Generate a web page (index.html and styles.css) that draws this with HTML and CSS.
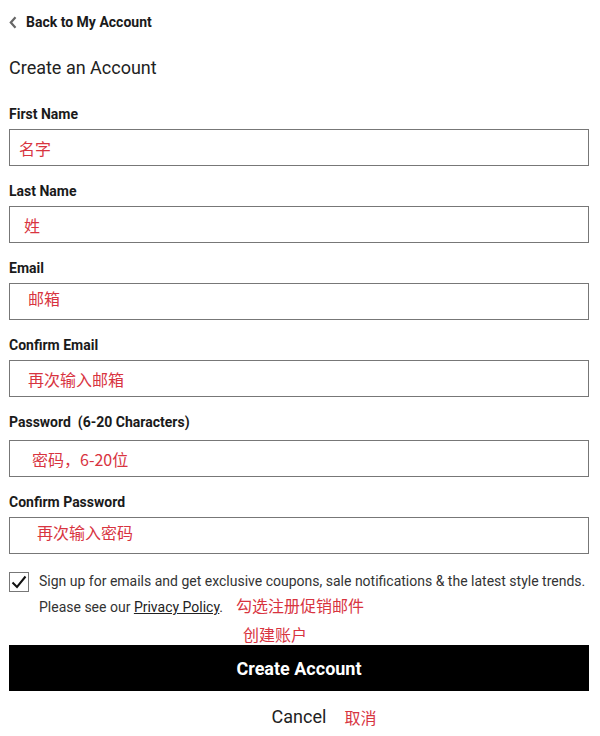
FILE: index.html
```html
<!DOCTYPE html>
<html lang="en">
<head>
<meta charset="utf-8">
<title>Create an Account</title>
<link rel="stylesheet" href="styles.css">
</head>
<body>
<div class="page">
  <a class="back" href="#">
    <svg class="chev" width="8" height="13" viewBox="0 0 8 13"><path d="M6.5 1.2 L1.8 6.5 L6.5 11.8" fill="none" stroke="#666" stroke-width="2.2"/></svg>
    <span>Back to My Account</span>
  </a>
  <h1 class="title">Create an Account</h1>

  <div class="field">
    <label class="label">First Name</label>
    <div class="input"><span class="note pad1">名字</span></div>
  </div>
  <div class="field">
    <label class="label">Last Name</label>
    <div class="input"><span class="note pad2">姓</span></div>
  </div>
  <div class="field">
    <label class="label">Email</label>
    <div class="input"><span class="note pad3 up">邮箱</span></div>
  </div>
  <div class="field">
    <label class="label">Confirm Email</label>
    <div class="input"><span class="note pad3">再次输入邮箱</span></div>
  </div>
  <div class="field field-wide">
    <label class="label">Password&nbsp; (6-20 Characters)</label>
    <div class="input"><span class="note pad4">密码，6-20位</span></div>
  </div>
  <div class="field">
    <label class="label">Confirm Password</label>
    <div class="input"><span class="note pad5 up">再次输入密码</span></div>
  </div>

  <div class="optin">
    <span class="box">
      <svg width="18" height="18" viewBox="0 0 18 18"><path d="M2.5 9.5 L7 14 L15.5 3.5" fill="none" stroke="#111" stroke-width="2"/></svg>
    </span>
    <div class="optin-text">
      <span class="optin-line">Sign up for emails and get exclusive coupons, sale notifications &amp; the latest style trends.</span>
      <span class="optin-line">Please see our <a href="#" class="link">Privacy Policy</a>.<span class="note inline">勾选注册促销邮件</span></span>
    </div>
  </div>
  <div class="note-line"><span class="note">创建账户</span></div>

  <button class="primary">Create Account</button>
  <div class="cancel-row">
    <span class="cancel">Cancel<span class="note cancel-note">取消</span></span>
  </div>
</div>
</body>
</html>
```

FILE: styles.css
```css
html, body {
  margin: 0;
  padding: 0;
  background: #fff;
}
body {
  font-family: Roboto, "Liberation Sans", sans-serif;
  color: #1a1a1a;
}
.page {
  padding: 0 11px 0 9px;
}
.back {
  display: flex;
  align-items: center;
  gap: 9px;
  margin-top: 13px;
  height: 18px;
  color: #1a1a1a;
  text-decoration: none;
  font-size: 14px;
  font-weight: 700;
  line-height: 18px;
}
.chev {
  display: block;
}
.title {
  margin: 24px 0 0;
  font-size: 18px;
  font-weight: 400;
  line-height: 26px;
  color: #222;
}
.field {
  margin-top: 16px;
}
.title + .field {
  margin-top: 24px;
}
.label {
  display: block;
  font-size: 14px;
  font-weight: 700;
  line-height: 18px;
  color: #1a1a1a;
  margin-bottom: 6px;
}
.field-wide .label {
  margin-bottom: 9px;
}
.input {
  box-sizing: border-box;
  height: 37px;
  border: 1px solid #777;
  display: flex;
  align-items: center;
}
.note {
  font-family: "Noto Sans CJK SC", sans-serif;
  font-size: 16px;
  color: #d8343f;
  line-height: 20px;
}
.pad1 { margin-left: 9px; }
.pad2 { margin-left: 14px; }
.pad3 { margin-left: 18px; }
.pad4 { margin-left: 22px; }
.pad5 { margin-left: 27px; }
.up { margin-top: -8px; }
.optin {
  display: flex;
  align-items: flex-start;
  gap: 10px;
  margin-top: 14px;
}
.box {
  box-sizing: border-box;
  flex: none;
  width: 20px;
  height: 20px;
  border: 1px solid #777;
  display: flex;
  align-items: center;
  justify-content: center;
  margin-top: 4px;
}
.box svg { display: block; }
.optin-text {
  font-size: 14px;
  line-height: 26px;
  color: #333;
}
.optin-line {
  display: block;
  white-space: nowrap;
}
.link {
  color: #222;
  text-decoration: underline;
}
.inline {
  margin-left: 13px;
  line-height: 1;
}
.note-line {
  padding-left: 234px;
  margin-top: 4px;
}
.primary {
  display: block;
  width: 100%;
  height: 46px;
  margin-top: 0;
  border: 0;
  background: #000;
  color: #fff;
  font-family: Roboto, "Liberation Sans", sans-serif;
  font-size: 18px;
  font-weight: 700;
}
.cancel-row {
  display: flex;
  justify-content: center;
  margin-top: 14px;
}
.cancel {
  position: relative;
  font-size: 18px;
  line-height: 24px;
  color: #222;
}
.cancel-note {
  position: absolute;
  left: calc(100% + 18px);
  top: 2px;
  white-space: nowrap;
}
```
